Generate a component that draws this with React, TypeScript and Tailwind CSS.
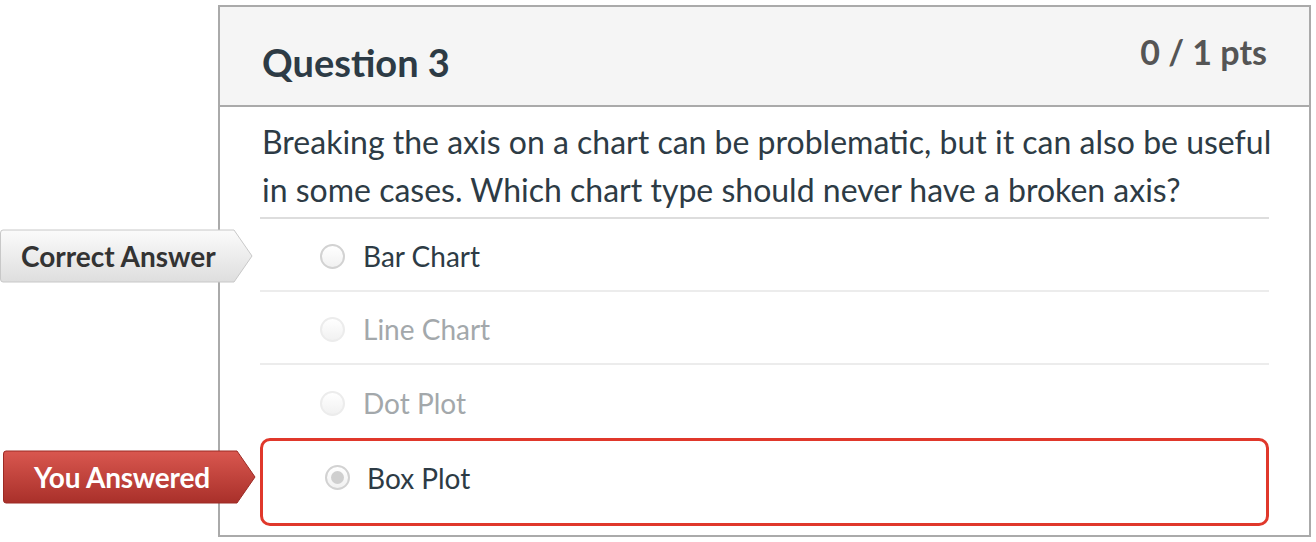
import React from 'react';

type Tone = 'correct' | 'wrong';

const Tag: React.FC<{ tone: Tone; label: string }> = ({ tone, label }) => {
    const isWrong = tone === 'wrong';
    const gid = isWrong ? 'tag-red' : 'tag-grey';
    return (
        <div className="relative w-[254px] h-[54px] flex items-center">
            <svg className="absolute inset-0" width="254" height="54" viewBox="0 0 254 54">
                <defs>
                    <linearGradient id={gid} x1="0" y1="0" x2="0" y2="1">
                        {isWrong ? (
                            <>
                                <stop offset="0" stopColor="#d9574f" />
                                <stop offset="1" stopColor="#a9302a" />
                            </>
                        ) : (
                            <>
                                <stop offset="0" stopColor="#fbfbfb" />
                                <stop offset="1" stopColor="#dedede" />
                            </>
                        )}
                    </linearGradient>
                </defs>
                <path
                    d="M3 1 H234 L252 27 L234 53 H3 Q0.5 53 0.5 50 V4 Q0.5 1 3 1 Z"
                    fill={`url(#${gid})`}
                    stroke={isWrong ? '#9c2a24' : '#c8c8c8'}
                    strokeWidth="1"
                />
            </svg>
            <span
                className={`relative font-bold text-[28px] leading-none ${isWrong ? 'text-white pl-[31px] tracking-[-0.2px]' : 'text-[#333] pl-[21px]'}`}
            >
                {label}
            </span>
        </div>
    );
};

const Radio: React.FC<{ faded?: boolean; checked?: boolean }> = ({ faded, checked }) => (
    <span
        className={`w-[25px] h-[25px] rounded-full border-2 flex items-center justify-center shrink-0 bg-gradient-to-b from-white to-[#f1f1f1] ${faded ? 'border-[#ececec]' : 'border-[#d2d2d2]'}`}
    >
        {checked && <span className="w-[13px] h-[13px] rounded-full bg-[#cfcfcf]" />}
    </span>
);

const answers = [
    { text: 'Bar Chart', faded: false, tag: 'correct' as Tone },
    { text: 'Line Chart', faded: true },
    { text: 'Dot Plot', faded: true },
];

export default function App() {
    return (
        <div className="w-[1316px] h-[542px] bg-white font-['Lato','Liberation_Sans',sans-serif] text-[#2d3b45]">
            <div className="ml-[218px] pt-[5px]">
                <div className="w-[1093px] h-[532px] border-2 border-[#aaaaaa]">
                    {/* header */}
                    <div className="h-[100px] bg-[#f5f5f5] border-b-2 border-[#aaaaaa] px-[40px] flex justify-between">
                        <h2 className="pt-[36px] pl-[2px] text-[38px] font-bold leading-none text-[#2d3b45]">Question 3</h2>
                        <div className="pt-[28px] pr-[2px] text-[34px] font-bold leading-none text-[#555555]">0 / 1 pts</div>
                    </div>

                    {/* body */}
                    <div className="px-[40px]">
                        <div className="pt-[11px] pb-[3px] border-b-2 border-[#dddddd]">
                            <p className="pl-[2px] -mr-[24px] text-[32px] leading-[48px]">
                                Breaking the axis on a chart can be problematic, but it can also be useful in some cases. Which chart type should never have a broken axis?
                            </p>
                        </div>

                        {answers.map((a, i) => (
                            <div
                                key={a.text}
                                className={`relative h-[73px] flex items-center pt-[3px] pl-[60px] ${i < 2 ? 'border-b-2 border-[#ececec]' : ''}`}
                            >
                                {a.tag && (
                                    <div className="absolute left-[-260px] top-[10px]">
                                        <Tag tone={a.tag} label="Correct Answer" />
                                    </div>
                                )}
                                <Radio faded={a.faded} />
                                <span className={`ml-[18px] text-[28px] ${a.faded ? 'text-[#a3a8ab]' : ''}`}>{a.text}</span>
                            </div>
                        ))}

                        <div className="relative h-[88px] border-[3px] border-[#e0382b] rounded-[10px] flex items-center pb-[9px] pl-[62px]">
                            <div className="absolute left-[-260px] top-[9px]">
                                <Tag tone="wrong" label="You Answered" />
                            </div>
                            <Radio checked />
                            <span className="ml-[17px] text-[28px]">Box Plot</span>
                        </div>
                    </div>
                </div>
            </div>
        </div>
    );
}
